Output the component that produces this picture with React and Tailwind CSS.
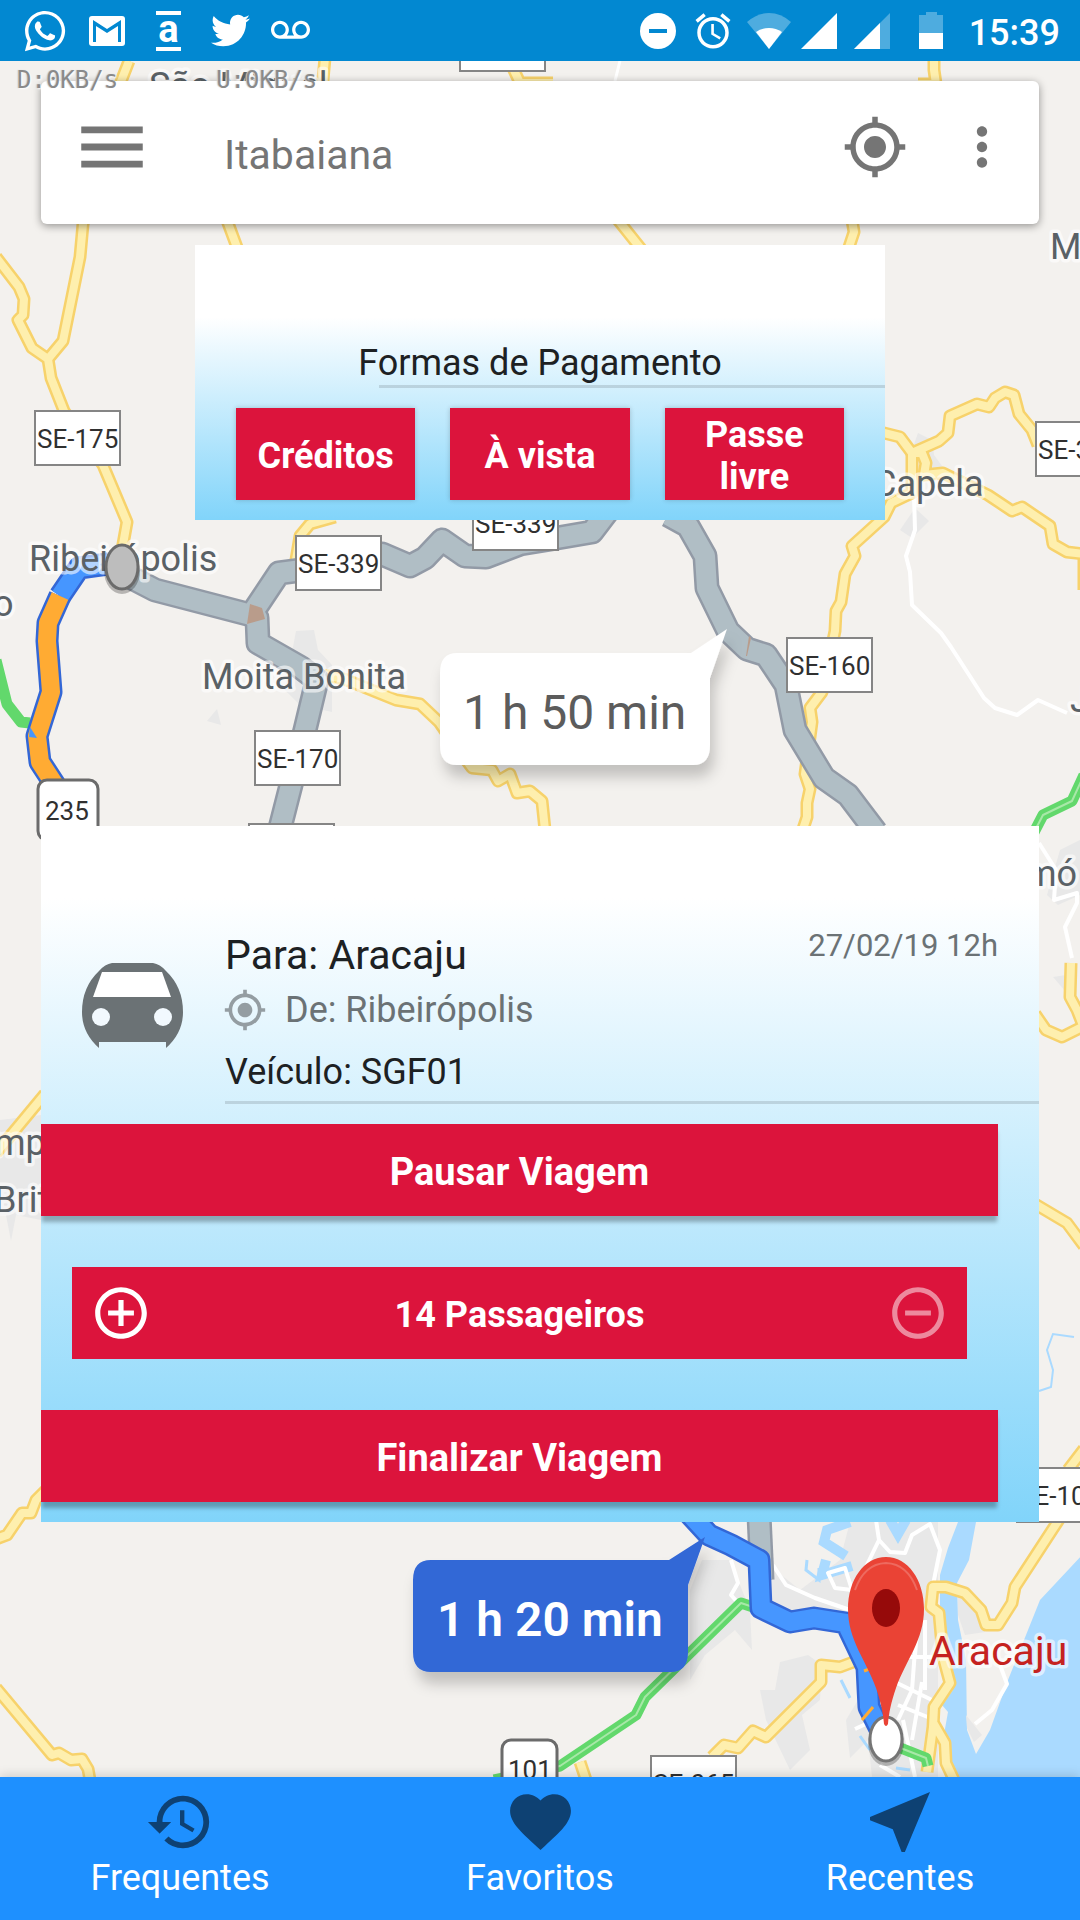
import React from "react";
import {
  MdMenu,
  MdMyLocation,
  MdMoreVert,
  MdHistory,
  MdFavorite,
  MdNearMe,
  MdAddCircleOutline,
  MdRemoveCircleOutline,
  MdAlarm,
  MdVoicemail,
} from "react-icons/md";
import { FaWhatsapp, FaTwitter } from "react-icons/fa";

const yellowRoads = [
  "M129 61 L120 84 L83 224 L80 257 L63 341 L48 359",
  "M-4 257 L19 287 L24 299 L23 315 L18 320 L32 348 L48 359 L51 378 L64 411 L103 465 L127 522 L122 550",
  "M325 58 L322 90 M225 215 L238 250",
  "M512 66 L520 83 L553 83",
  "M614 215 L642 250 M934 58 L934 70 L936 84 L918 84 M852 220 L854 232 L848 250",
  "M880 432 L900 437 L912 453 L939 441 L948 433 L950 416 L977 404 L989 407 L995 398 L1005 392 L1014 395 L1019 414 L1032 430 L1038 445",
  "M912 453 L912 493 L891 503 L884 517 L852 546 L855 556 L845 574 L841 602 L836 611 L835 631 L822 692 L810 708 L812 722 L805 774 L810 789 L807 803 L807 817 L802 832",
  "M915 453 L922 453 L926 463 L924 475 L943 473 L988 495 L1012 511 L1022 507 L1050 526 L1053 544 L1067 552 L1084 554 L1084 590",
  "M296 560 L300 536 L310 524 L335 517",
  "M324 675 L344 679 L396 700 L420 704 L439 722 L455 745 L472 768 L492 770 L498 781 L510 774 L517 793 L530 791 L542 801 L545 830",
  "M-4 1153 L45 1094",
  "M1071 963 L1070 997 L1077 1010 L1084 1028 M1035 1014 L1046 1030 L1062 1037 L1084 1026",
  "M1035 1204 L1067 1223 L1084 1246 M1084 1449 L1068 1470",
  "M-4 1539 L7 1535 L22 1513 L31 1513 L36 1500 L46 1490",
  "M-4 1688 L52 1755 L59 1753 L71 1760 L82 1759 L88 1769 L90 1780",
  "M712 1757 L724 1745 L738 1748 L753 1731 L766 1737 L821 1682 L821 1665 L840 1667 L856 1661",
  "M580 1762 L586 1780",
  "M1060 1518 L1015 1587 L1012 1603 L998 1625 L986 1625 L981 1610 L965 1593 L946 1587 L933 1587 L931 1607 L939 1613 L943 1657 L950 1683 L934 1707 L933 1727 L927 1772",
  "M934 1724 L945 1743 L946 1763 L954 1780",
];

const greyRoutes = [
  "M126 575 L155 590 L251 615 L279 573 L340 565 L382 554 L410 566 L425 558 L442 540 L465 556 L486 557 L520 544 L557 538 L592 532 L608 511",
  "M251 615 L257 618 L258 643 L300 667 L317 680 L305 730 L279 832",
  "M668 515 L688 526 L705 556 L707 588 L728 631 L747 649 L766 655 L786 685 L795 730 L824 778 L848 795 L876 832",
  "M759 1515 L762 1580",
];

const orangeRoute =
  "M60 596 L48 623 L47 641 L51 692 L37 736 L40 762 L55 785";
const blueStart = "M122 562 L79 568 L60 596";
const blueRoute =
  "M686 1510 L709 1535 L731 1545 L759 1560 L761 1608 L790 1622 L814 1618 L846 1623 L867 1667 L869 1707 L884 1737";
const greens = [
  "M-4 660 L7 704 L21 722 L30 723",
  "M1084 775 L1072 801 L1043 815 L1030 840",
  "M494 1780 L560 1766 L636 1715 L645 1697 L741 1603 L756 1608",
  "M898 1747 L926 1758 L928 1766",
];

const signs = [
  { x: 35, y: 411, t: "SE-175" },
  { x: 296, y: 536, t: "SE-339" },
  { x: 473, y: 496, t: "SE-339" },
  { x: 255, y: 731, t: "SE-170" },
  { x: 787, y: 638, t: "SE-160" },
  { x: 1036, y: 422, t: "SE-339" },
  { x: 1017, y: 1468, t: "SE-100" },
  { x: 651, y: 1756, t: "SE-065" },
  { x: 460, y: 17, t: "" },
  { x: 249, y: 824, t: "" },
];

const places = [
  { x: 149, y: 98, t: "São Miguel" },
  { x: 29, y: 571, t: "Ribeirópolis" },
  { x: 202, y: 689, t: "Moita Bonita" },
  { x: 873, y: 496, t: "Capela" },
  { x: 1050, y: 259, t: "M" },
  { x: 1070, y: 712, t: "J" },
  { x: -7, y: 616, t: "o" },
  { x: 1025, y: 886, t: "mó" },
  { x: -6, y: 1155, t: "mp" },
  { x: -6, y: 1212, t: "Brit" },
];

const Lines = ({ paths, color, width }) =>
  paths.map((d, i) => (
    <path
      key={i}
      d={d}
      fill="none"
      stroke={color}
      strokeWidth={width}
      strokeLinejoin="round"
    />
  ));

function MapBackground() {
  return (
    <svg
      className="absolute inset-0 size-full"
      viewBox="0 61 1080 1716"
      preserveAspectRatio="xMidYMin slice"
      aria-label="Mapa"
      fontFamily="Roboto, sans-serif"
    >
      <defs>
        <filter id="soft" x="-20%" y="-20%" width="150%" height="160%">
          <feDropShadow dx="4" dy="12" stdDeviation="7" floodOpacity="0.2" />
        </filter>
      </defs>
      <rect y="61" width="1080" height="1716" fill="#f3f1ee" />
      <g fill="#e8e8e8">
        <path d="M296 631 L314 630 L318 650 L332 665 L332 712 L300 705 L285 690 Z" />
        <path d="M207 721 L217 709 L221 725 Z" />
        <path d="M918 433 L932 440 L934 455 L945 470 L928 475 L912 450 Z" />
        <path d="M915 508 L929 521 L912 538 L900 530 Z" />
        <path d="M1060 850 L1080 840 L1080 895 L1058 905 L1047 895 Z" />
        <path d="M1053 977 L1066 975 L1066 992 Z" />
        <path d="M0 1120 L41 1115 L41 1220 L16 1215 L11 1241 L6 1215 L0 1215 Z" />
        <path d="M690 1590 L702 1560 L730 1560 L750 1610 L752 1650 L735 1630 L705 1655 L690 1680 Z" />
        <path d="M762 1530 L775 1570 L800 1590 L840 1560 L850 1522 L938 1522 L938 1777 L872 1777 L868 1740 L850 1758 L846 1720 L870 1680 L845 1625 L765 1605 Z" />
        <path d="M760 1690 L775 1690 L780 1662 L808 1655 L822 1665 L820 1700 L802 1715 L810 1750 L790 1770 L766 1720 Z" />
      </g>
      <path
        d="M958 1522 L976 1522 L969 1560 L957 1583 L958 1620 L966 1660 L967 1730 L976 1754 L990 1730 L1008 1680 L1040 1600 L1084 1553 L1084 1777 L955 1777 L943 1740 L948 1712 L942 1705 L953 1690 L940 1620 L940 1575 L948 1548 Z"
        fill="#aadaff"
      />
      <g fill="#e8e8e8">
        <path d="M958 1588 L975 1600 L985 1632 L965 1635 L958 1615 Z" />
        <path d="M966 1715 L982 1735 L974 1742 L967 1728 Z" />
      </g>
      <g fill="none" stroke="#aadaff">
        <path
          d="M850 1522 L827 1530 L824 1542 L846 1556 M826 1560 L822 1575 L852 1566 M890 1520 L898 1534 L906 1520"
          strokeWidth="10"
        />
        <path
          d="M807 1560 L806 1570 L819 1580 L819 1568 M841 1680 L850 1698 M860 1736 L870 1750 M896 1768 L910 1770"
          strokeWidth="3"
        />
        <path
          d="M1074 1337 L1053 1334 L1047 1350 L1053 1370 L1051 1387 L1039 1391"
          strokeWidth="2"
        />
      </g>
      <g fill="none" stroke="#ffffff" strokeWidth="4" strokeLinejoin="round">
        <path d="M620 61 L615 81" strokeWidth="3" />
        <path d="M914 495 L915 530 L906 556 L910 572 L912 605 L941 633 L951 647 L984 698 L995 708 L1017 715 L1038 700 L1067 713" />
        <path d="M1039 843 L1056 870 L1054 900 L1077 893 L1077 903 L1065 927 L1072 958" />
        <path d="M876 1520 L879 1540 L862 1575 M879 1540 L890 1552 L905 1553 L912 1535 L930 1524 L940 1550 L932 1590" />
        <path d="M773 1565 L786 1585 L815 1598 L850 1610 M828 1573 L845 1568 L852 1590 L835 1588 Z" />
        <path d="M731 1560 L738 1583 L731 1595 L740 1605" />
        <path d="M915 1650 L912 1690 L898 1720 M895 1682 L932 1700 M905 1657 L932 1657 M922 1682 L912 1740 M898 1705 L930 1718 M918 1620 L915 1655 M903 1720 L915 1777 M880 1765 L900 1777 M925 1620 L925 1690" />
        <path d="M855 1729 L868 1723 M1000 1665 L1007 1684 L992 1710 L975 1724" />
      </g>

      <Lines paths={yellowRoads} color="#f7d26b" width={13} />
      <Lines paths={yellowRoads} color="#feefae" width={8} />
      <Lines paths={greens} color="#62d86c" width={11} />
      <Lines paths={greens.slice(1)} color="#a8e8a8" width={2} />
      <Lines paths={greyRoutes} color="#929aa6" width={25} />
      <Lines paths={greyRoutes} color="#b0bec5" width={20} />
      <path d="M250 604 L262 608 L265 619 L247 624 Z" fill="#b99c8b" />
      <path d="M749 636 L751 638 L747 656 L746 656 Z" fill="#b99c8b" />
      <Lines paths={[blueStart, orangeRoute, blueRoute]} color="#3367d6" width={23} />
      <Lines paths={[blueStart, blueRoute]} color="#4696ff" width={18} />
      <Lines paths={[orangeRoute]} color="#ffab33" width={18} />
      <path d="M30 727 L37 738 L29 737 Z" fill="#4696ff" />
      <path d="M864 1671 L872 1668 M862 1720 L873 1707" stroke="#ffab33" strokeWidth="3" />

      {signs.map((s, i) => (
        <g key={i}>
          <rect x={s.x} y={s.y} width="85" height="54" fill="#fff" stroke="#858585" strokeWidth="2" />
          <text x={s.x + 2} y={s.y + 37} fontSize="26" fill="#303030">
            {s.t}
          </text>
        </g>
      ))}
      <rect x="38" y="780" width="60" height="60" rx="9" fill="#fff" stroke="#6b6b6b" strokeWidth="3" />
      <text x="45" y="820" fontSize="26" fill="#303030">235</text>
      <rect x="502" y="1740" width="55" height="60" rx="9" fill="#fff" stroke="#6b6b6b" strokeWidth="3" />
      <text x="508" y="1779" fontSize="26" fill="#303030">101</text>

      <g fontSize="36" stroke="#ffffff" strokeOpacity="0.6" strokeWidth="7" strokeLinejoin="round" paintOrder="stroke" fill="#5a6166">
        {places.map((p) => (
          <text key={p.t} x={p.x} y={p.y}>
            {p.t}
          </text>
        ))}
        <text x="929" y="1665" fontSize="41" fill="#c5221f">
          Aracaju
        </text>
      </g>

      <ellipse cx="122" cy="571" rx="18" ry="23" fill="#000" opacity="0.25" />
      <ellipse cx="122" cy="567" rx="16" ry="22" fill="#bdbdbd" stroke="#6b6b6b" strokeWidth="3" />

      <path
        d="M457 653 H691 L727 629 L710 678 V745 Q710 765 693 765 H457 Q440 765 440 745 V673 Q440 653 457 653 Z"
        fill="#fff"
        filter="url(#soft)"
      />
      <text x="463" y="729" fontSize="48" fill="#5c5c5c">1 h 50 min</text>
      <path
        d="M431 1560 H669 L705 1537 L688 1585 V1652 Q688 1672 671 1672 H431 Q413 1672 413 1652 V1580 Q413 1560 431 1560 Z"
        fill="#3367d6"
        filter="url(#soft)"
      />
      <text x="437" y="1636" fontSize="48" fontWeight="600" fill="#fff">1 h 20 min</text>

      <ellipse cx="886" cy="1743" rx="18" ry="23" fill="#000" opacity="0.25" />
      <ellipse cx="886" cy="1739" rx="16" ry="22" fill="#fff" stroke="#757575" strokeWidth="3" />
      <path
        d="M886 1557 C864 1557 848 1580 848 1609 C848 1640 866 1660 876 1688 C881 1703 883 1712 884 1724 Q886 1728 888 1724 C889 1712 891 1703 896 1688 C906 1660 924 1640 924 1609 C924 1580 908 1557 886 1557 Z"
        fill="#ea4335"
      />
      <path d="M855 1590 Q864 1564 886 1563 Q908 1564 917 1590" fill="none" stroke="#ee6a5f" strokeWidth="2" />
      <ellipse cx="886" cy="1608" rx="14" ry="19" fill="#960a0a" />
    </svg>
  );
}

function CarIcon() {
  return (
    <svg viewBox="0 0 102 86" className="h-[86px] w-[102px] shrink-0" aria-hidden="true">
      <path
        d="M30 0 H71 Q78 1 84 8 Q101 24 101 49 Q101 70 84 85 V79 H17 V85 Q0 70 0 49 Q0 24 17 8 Q23 1 30 0 Z"
        fill="#6b7275"
      />
      <path d="M20 9 H80 L89 34 H11 Z" fill="#fff" />
      <circle cx="19" cy="54" r="9" fill="#f2f9fe" />
      <circle cx="81" cy="54" r="9" fill="#f2f9fe" />
    </svg>
  );
}

function StatusBar() {
  return (
    <header className="relative z-10 flex h-[61px] items-center justify-between bg-[#0288d1] pr-[20px] pl-[22px] text-white">
      <div className="flex items-center">
        <FaWhatsapp className="size-[46px]" />
        <svg viewBox="0 0 36 30" className="ml-[21px] h-[30px] w-[36px]" aria-hidden="true">
          <rect width="36" height="30" rx="3" fill="#fff" />
          <path d="M4 26 V4 L18 13 L32 4 V26 H29 V10 L18 17 L7 10 V26 Z" fill="#0288d1" />
        </svg>
        <span className="ml-[31px] flex h-[40px] w-[25px] flex-col items-center justify-center border-y-4 border-white text-[38px] leading-[28px] font-bold">
          <span className="-mt-1">a</span>
        </span>
        <FaTwitter className="ml-[30px] size-[39px]" />
        <MdVoicemail className="ml-[21px] size-[39px]" />
      </div>
      <div className="flex items-center">
        <svg viewBox="0 0 36 36" className="size-[36px]" aria-hidden="true">
          <circle cx="18" cy="18" r="18" fill="#fff" />
          <rect x="9" y="16" width="18" height="4" fill="#0288d1" />
        </svg>
        <MdAlarm className="ml-[16px] size-[42px]" />
        <svg viewBox="0 0 44 36" className="ml-[13px] h-[36px] w-[44px]" aria-hidden="true">
          <path d="M0 9 Q10 0 22 0 Q34 0 44 9 L22 36 Z" fill="#fff" fillOpacity="0.3" />
          <path d="M9 19 Q15 15 22 15 Q29 15 35 19 L22 36 Z" fill="#fff" />
        </svg>
        <svg viewBox="0 0 36 36" className="ml-[10px] size-[36px]" aria-hidden="true">
          <path d="M36 0 V36 H0 Z" fill="#fff" />
        </svg>
        <svg viewBox="0 0 36 36" className="ml-[17px] size-[36px]" aria-hidden="true">
          <path d="M36 0 V36 H0 Z" fill="#fff" fillOpacity="0.3" />
          <path d="M26 10 V36 H0 Z" fill="#fff" />
        </svg>
        <svg viewBox="0 0 24 37" className="ml-[29px] h-[37px] w-[24px]" aria-hidden="true">
          <path d="M7 0 H18 V3 H24 V21 H0 V3 H7 Z" fill="#fff" fillOpacity="0.3" />
          <path d="M0 21 H24 V37 H0 Z" fill="#fff" />
        </svg>
        <time className="ml-[26px] pt-1 text-[36px] leading-10 font-medium">15:39</time>
      </div>
      <div className="absolute top-[66px] left-[17px] flex gap-[98px] font-['DejaVu_Sans_Mono',monospace] text-2xl leading-7 font-extralight text-[#8a8a8a] [text-shadow:1px_1px_2px_#fff,-1px_0_1px_#ccc]">
        <span>D:0KB/s</span>
        <span>U:0KB/s</span>
      </div>
    </header>
  );
}

const payButton =
  "flex h-[92px] flex-1 items-center justify-center bg-[#dc143c] px-4 pt-1 text-center text-[36px] leading-[42px] font-bold text-white shadow-[0_0_5px_rgba(0,0,0,0.2)]";
const wideButton =
  "mr-[41px] h-[92px] bg-[#dc143c] pt-1 text-[38px] leading-10 font-bold text-white shadow-[0_7px_4px_-1px_rgba(0,0,0,0.28)]";

function PaymentCard() {
  return (
    <section
      aria-labelledby="payment-title"
      className="mx-[195px] mt-[21px] bg-[linear-gradient(#fff_72px,#81d4fa)] pt-[96px] pb-5"
    >
      <h2 id="payment-title" className="text-center text-[36px] leading-[44px] text-[#1d2123]">
        Formas de Pagamento
      </h2>
      <hr className="ml-[184px] border-t-[3px] border-black/12" />
      <div className="mx-[41px] mt-5 flex gap-[35px]">
        <button className={payButton}>Créditos</button>
        <button className={payButton}>À vista</button>
        <button className={payButton}>Passe livre</button>
      </div>
    </section>
  );
}

function TripCard() {
  return (
    <section
      aria-label="Viagem"
      className="mx-[41px] mt-auto flex flex-col overflow-hidden bg-[linear-gradient(#fff_72px,#81d4fa)] pt-[102px] pb-5"
    >
      <div className="flex pl-[41px]">
        <div className="pt-[35px]">
          <CarIcon />
        </div>
        <div className="ml-[41px] flex flex-1 flex-col border-b-[3px] border-black/12 pb-[3px]">
          <div className="flex items-start justify-between pr-[41px]">
            <h2 className="text-[41px] leading-[54px] text-[#1d2123]">Para: Aracaju</h2>
            <time className="text-[31px] leading-9 text-[#6b7275]">27/02/19 12h</time>
          </div>
          <p className="flex items-center gap-[18px] text-[36px] leading-[56px] text-[#6b7275]">
            <MdMyLocation className="-ml-0.5 size-[44px] text-[#949da2]" />
            De: Ribeirópolis
          </p>
          <p className="mt-2 text-[36px] leading-[52px] text-[#1d2123]">Veículo: SGF01</p>
        </div>
      </div>
      <button className={wideButton + " mt-5"}>Pausar Viagem</button>
      <div className="mt-[51px] mr-[72px] ml-[31px] flex h-[92px] items-center justify-between bg-[#dc143c] px-[18px] text-[36px] leading-10 font-bold text-white">
        <button aria-label="Adicionar passageiro">
          <MdAddCircleOutline className="size-[62px]" />
        </button>
        <span className="pt-1">14 Passageiros</span>
        <button aria-label="Remover passageiro" className="opacity-50">
          <MdRemoveCircleOutline className="size-[62px]" />
        </button>
      </div>
      <button className={wideButton + " mt-[51px]"}>Finalizar Viagem</button>
    </section>
  );
}

const tabs = [
  { label: "Frequentes", icon: <MdHistory className="size-[70px]" /> },
  { label: "Favoritos", icon: <MdFavorite className="size-[73px]" /> },
  { label: "Recentes", icon: <MdNearMe className="size-[80px]" /> },
];

export default function App() {
  return (
    <div className="flex min-h-screen flex-col bg-[#f3f1ee] font-[Roboto,sans-serif]">
      <StatusBar />
      <main className="relative flex flex-1 flex-col overflow-hidden pb-[255px]">
        <MapBackground />
        <div className="relative flex flex-1 flex-col">
          <div className="mx-[41px] mt-5 flex h-[143px] items-center rounded-md bg-white pr-[26px] pb-3 pl-[30px] text-[#757575] shadow-[0_2px_8px_rgba(0,0,0,0.4)]">
            <button aria-label="Menu">
              <MdMenu className="size-[82px]" />
            </button>
            <input
              type="text"
              aria-label="Local"
              defaultValue="Itabaiana"
              className="ml-[71px] min-w-0 flex-1 pt-4 text-[41px] leading-[54px] outline-none"
            />
            <button aria-label="Minha localização">
              <MdMyLocation className="size-[66px]" />
            </button>
            <button aria-label="Mais opções" className="ml-[43px]">
              <MdMoreVert className="size-[62px]" />
            </button>
          </div>
          <PaymentCard />
          <TripCard />
        </div>
      </main>
      <nav className="relative flex h-[143px] bg-[#1e90ff] shadow-[0_-2px_10px_rgba(0,0,0,0.15)]">
        {tabs.map((t) => (
          <a key={t.label} href="#" className="flex flex-1 flex-col items-center text-[36px] leading-10 text-white">
            <span className="flex h-[89px] items-center text-[#0e4173]">{t.icon}</span>
            <span className="-mt-2">{t.label}</span>
          </a>
        ))}
      </nav>
    </div>
  );
}
